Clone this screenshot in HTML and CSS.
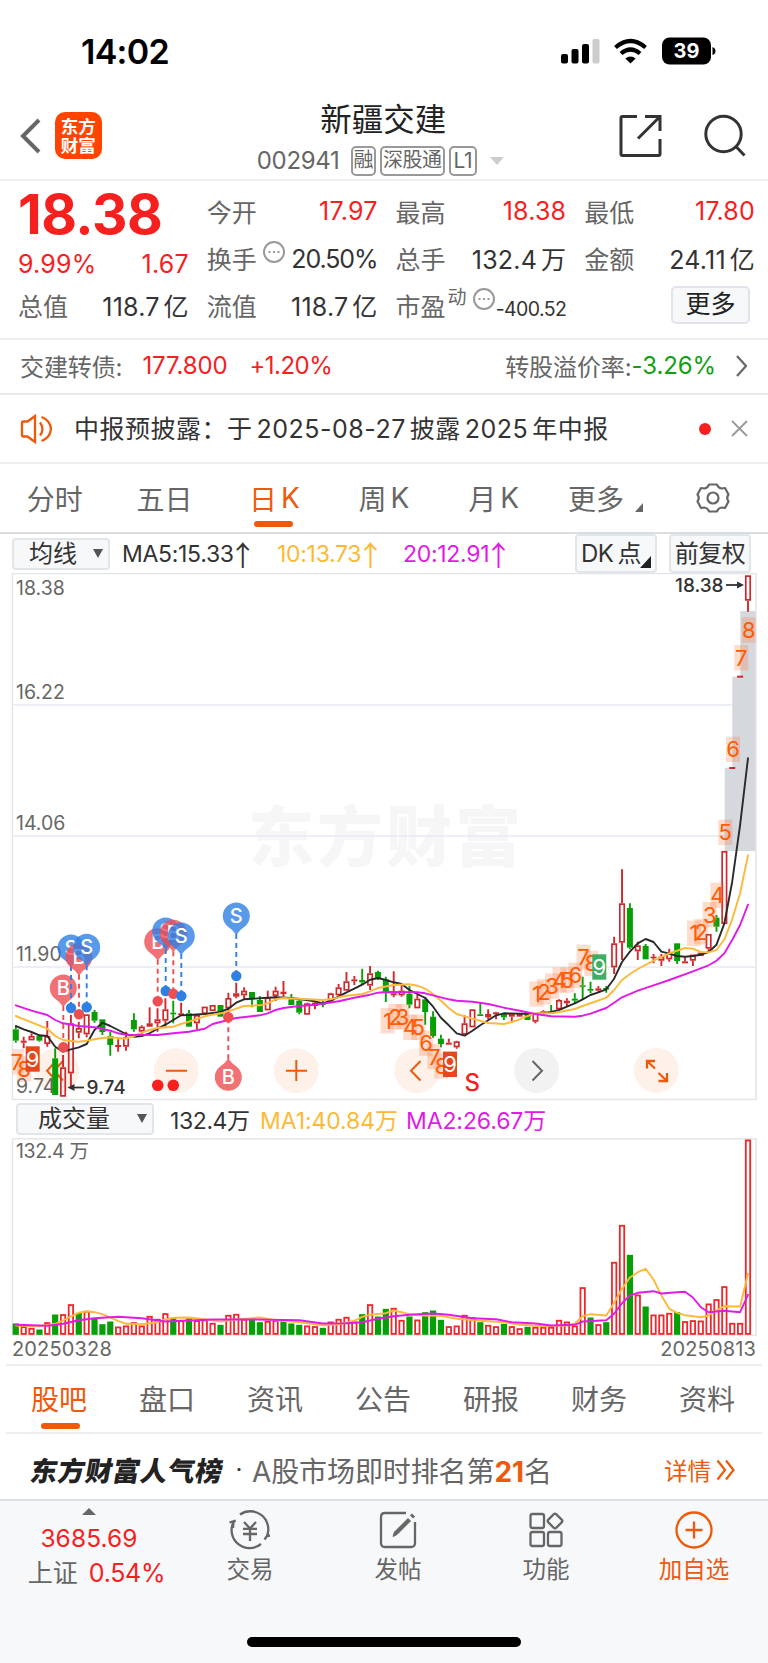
FILE: index.html
```html
<!DOCTYPE html>
<html lang="zh-CN">
<head>
<meta charset="utf-8">
<title>新疆交建 002941</title>
<link rel="stylesheet" href="styles.css">
</head>
<body>
<div class="app">
  <header class="status">
    <span class="clock">14:02</span>
    <svg class="status-icons" width="156" height="30" viewBox="0 0 156 30">
      <rect x="0" y="17" width="7" height="9.5" rx="2"/><rect x="10.500" y="12" width="7" height="14.500" rx="2"/><rect x="21" y="7" width="7" height="19.500" rx="2"/><rect x="31.500" y="2" width="7" height="24.500" rx="2" fill="#ccc"/>
      <g fill="none" stroke="#000" stroke-width="4.200"><path d="M54.500 10.500 Q69.500 -2.500 84.500 10.500"/><path d="M60 16.500 Q69.500 8.500 79 16.500"/></g>
      <path d="M64.300 21.500 Q69.500 17.500 74.700 21.500 L69.500 26.500 Z"/>
      <rect x="101" y="0.500" width="49" height="27" rx="7.500"/><path d="M151.500 10 Q154.500 11 154.500 14 T151.500 18 Z"/>
      <text x="125.500" y="21" class="battery">39</text>
    </svg>
  </header>

  <nav class="titlebar">
    <svg class="back" width="24" height="38" viewBox="0 0 24 38"><path d="M20 3 L4 19 L20 35"/></svg>
    <div class="logo"><span>东方</span><span>财富</span></div>
    <div class="title">
      <h1>新疆交建</h1>
      <div class="code"><span class="num">002941</span><i>融</i><i class="w3">深股通</i><i class="w2">L1</i><b class="caret"></b></div>
    </div>
    <svg class="share" width="44" height="44" viewBox="0 0 44 44"><path d="M18 2.500H3.500Q2 2.500 2 4V40Q2 41.500 3.500 41.500H39.500Q41 41.500 41 40V25 M26 2.500H41V17 M41 2.500 L19 24.500"/></svg>
    <svg class="search" width="44" height="44" viewBox="0 0 44 44"><circle cx="20.500" cy="20" r="17.700"/><path d="M32.500 32 L41.500 41.500"/></svg>
  </nav>

  <section class="quote">
    <div class="cell price">18.38</div>
    <div class="cell"><label>今开</label><b class="red">17.97</b></div>
    <div class="cell"><label>最高</label><b class="red">18.38</b></div>
    <div class="cell"><label>最低</label><b class="red">17.80</b></div>
    <div class="cell low"><b class="red">9.99%</b><b class="red">1.67</b></div>
    <div class="cell"><label>换手<svg class="dots" width="22" height="22" viewBox="0 0 22 22"><circle cx="11" cy="11" r="10"/><path d="M5.500 11h2M10 11h2M14.500 11h2"/></svg></label><b class="tight">20.50%</b></div>
    <div class="cell"><label>总手</label><b>132.4<s></s>万</b></div>
    <div class="cell"><label>金额</label><b>24.11<s></s>亿</b></div>
    <div class="cell"><label>总值</label><b>118.7<s></s>亿</b></div>
    <div class="cell"><label>流值</label><b>118.7<s></s>亿</b></div>
    <div class="cell"><label>市盈<sup>动</sup><svg class="dots" width="22" height="22" viewBox="0 0 22 22"><circle cx="11" cy="11" r="10"/><path d="M5.500 11h2M10 11h2M14.500 11h2"/></svg></label><b class="small">-400.52</b></div>
    <div class="cell end"><button class="more">更多</button></div>
  </section>

  <section class="bond">
    <span>交建转债:</span><span class="red b1">177.800</span><span class="red b2">+1.20%</span>
    <span class="premium">转股溢价率:</span><span class="green">-3.26%</span>
    <svg class="chev" width="14" height="24" viewBox="0 0 14 24"><path d="M2 2 L11 12 L2 22"/></svg>
  </section>

  <section class="notice">
    <svg width="34" height="30" viewBox="0 0 34 30"><path d="M2 8.500Q2 7.500 3 7.500H7.500L15 2V28L7.500 22.500H3Q2 22.500 2 21.500Z M20 8.500Q25 15 20 21.500 M21.500 3Q30 6 31 15Q30 24 21.500 27"/></svg>
    <span class="msg">中报预披露：<span class="msg2">于<s></s>2025-08-27<s></s>披露<s></s>2025<s></s>年中报</span></span>
    <i class="dot"></i>
    <svg class="close" width="17" height="17" viewBox="0 0 17 17"><path d="M1 1L16 16M16 1L1 16"/></svg>
  </section>

  <nav class="tabs">
    <span>分时</span><span>五日</span><span class="on">日<s></s>K</span><span>周<s></s>K</span><span>月<s></s>K</span><span class="hasmore">更多<i></i></span>
    <span><svg class="gear" width="34" height="32" viewBox="0 0 34 32"><path d="M13 2.500H21Q22 6 25.500 6.500L29 6L32.500 12.500Q30 16 32.500 19.500L29 26L25.500 25.500Q22 26 21 29.500H13Q12 26 8.500 25.500L5 26L1.500 19.500Q4 16 1.500 12.500L5 6L8.500 6.500Q12 6 13 2.500Z"/><circle cx="17" cy="16" r="5.500"/></svg></span>
  </nav>

  <div class="malist">
    <button class="pick">均线<i></i></button>
    <span class="m5">MA5:15.33<em>↑</em></span><span class="m10">10:13.73<em>↑</em></span><span class="m20">20:12.91<em>↑</em></span>
    <button class="dk">DK<s></s>点<i></i></button><button class="fq">前复权</button>
  </div>

  <svg id="kline" class="chart" width="768" height="528" viewBox="0 573 768 528"></svg>

  <div class="vollist">
    <button class="pick wide">成交量<i></i></button>
    <span class="v0">132.4万</span><span class="m10 v1">MA1:40.84万</span><span class="m20 v2">MA2:26.67万</span>
  </div>

  <svg id="volume" class="chart" width="768" height="198" viewBox="0 1137.500 768 198"></svg>
  <div class="dates"><span>20250328</span><span>20250813</span></div>

  <nav class="tabs info">
    <span class="on">股吧</span><span>盘口</span><span>资讯</span><span>公告</span><span>研报</span><span>财务</span><span>资料</span>
  </nav>

  <section class="rank">
    <strong>东方财富人气榜</strong><span class="mid">·</span>
    <span class="ranktext">A股市场即时排名第<b>21</b>名</span>
    <span class="detail">详情</span>
    <svg width="20" height="22" viewBox="0 0 20 22"><path d="M1.500 1.500L9 11L1.500 20.500M10 1.500L17.500 11L10 20.500"/></svg>
  </section>

  <footer class="dock">
    <div class="index"><i></i><b>3685.69</b><p>上证<b>0.54%</b></p></div>
    <div class="item"><svg width="44" height="40" viewBox="0 0 44 40"><path d="M12 4.500A18 18 0 0 1 39 26L36.500 29.500M39 26L42 25.500 M33 34A18 18 0 0 1 5.500 12L7.500 10.500L1.500 12.500M5.500 12L5 18 M16 12L22 18.500L28 12M15 18.800H29M15 24H29M22 18.500V31"/></svg>交易</div>
    <div class="item"><svg width="44" height="40" viewBox="0 0 44 40"><path d="M30 3H9Q5 3 5 7V33Q5 37 9 37H35Q39 37 39 33V12"/><path d="M17 26.500L18.500 22L32 8.500L34.500 11L21 24.500Z" fill="#666" stroke-width="1"/><path d="M35.500 7L37.500 5" stroke-width="4.500"/></svg>发帖</div>
    <div class="item"><svg width="44" height="40" viewBox="0 0 44 40"><rect x="6.500" y="4" width="13.500" height="14" rx="2"/><rect x="6.500" y="22" width="13.500" height="14" rx="2"/><rect x="24" y="22" width="13.500" height="14" rx="2"/><rect x="25.300" y="5.300" width="11.400" height="11.400" rx="2" transform="rotate(45 31 11)"/></svg>功能</div>
    <div class="item add"><svg width="44" height="40" viewBox="0 0 44 40"><circle cx="22" cy="20" r="17.500"/><path d="M22 11.500V28.500M13.500 20H30.500"/></svg>加自选</div>
    <div class="home"></div>
  </footer>
</div>
<script src="chart.js"></script>
</body>
</html>
```
FILE: styles.css
```css
* { box-sizing: border-box; }
body { margin: 0; background: #fff; font-family: Inter, "Noto Sans CJK SC", sans-serif; color: #333; }
button { font: inherit; color: inherit; padding: 0; margin: 0; }
h1, p { margin: 0; font-weight: 400; }
i, em { font-style: normal; }
s { display: inline-block; width: 4px; }
svg { flex: none; display: block; }
.app { width: 768px; height: 1663px; display: flex; flex-direction: column; overflow: hidden; white-space: nowrap; }
.app > * { flex: none; }
.red { color: #f6211f; }
.green { color: #10a10f; }

.status { height: 95px; display: flex; justify-content: space-between; padding: 37px 51px 0 81px; }
.clock { font-size: 34px; line-height: 30px; font-weight: 600; color: #000; letter-spacing: -0.700px; }
.battery { fill: #fff; font: 700 20px Inter, sans-serif; text-anchor: middle; }

.titlebar { height: 86px; display: flex; align-items: center; padding: 0 21px 3px 19px; border-bottom: 2px solid #f0f0f0; }
.back { fill: none; stroke: #666; stroke-width: 4; }
.logo { margin-left: 12px; width: 47px; height: 47px; border-radius: 10px; background: #ff4400; color: #fff; font: 700 17.500px/18.500px "Noto Sans CJK SC", sans-serif; display: flex; flex-direction: column; align-items: center; justify-content: center; }
.title { margin-left: 148px; width: 266px; text-align: center; padding-top: 6px; }
.title h1 { font-size: 31.500px; line-height: 40px; color: #222; padding-left: 3px; }
.code { display: flex; align-items: center; height: 34px; margin-top: 4px; padding-left: 7px; color: #666; }
.code .num { font-size: 24px; letter-spacing: -0.300px; width: 91px; margin-right: 3px; text-align: left; }
.code i { border: 2px solid #999; border-radius: 5px; height: 30px; width: 25px; margin-right: 4px; font-size: 20px; line-height: 25px; letter-spacing: -0.500px; display: flex; align-items: center; justify-content: center; }
.code i.w3 { width: 65px; }
.code i.w2 { width: 28px; font-size: 21px; }
.code .caret { margin-left: 9px; border: 7px solid transparent; border-top: 8px solid #ccc; border-bottom: 0; }
.share { margin-left: 105px; fill: none; stroke: #333; stroke-width: 3; }
.search { margin-left: 40px; fill: none; stroke: #333; stroke-width: 3; }

.quote { height: 159px; display: grid; grid-template-columns: repeat(4, 1fr); grid-template-rows: 47px 47px 47px; column-gap: 18px; padding: 6px 13px 0 18px; border-bottom: 2px solid #eee; }
.cell { display: flex; align-items: center; justify-content: space-between; }
.cell label { font-size: 25px; color: #666; display: flex; align-items: center; }
.cell b { font-weight: 400; font-size: 25px; letter-spacing: 0.200px; }
.cell b.tight { letter-spacing: -1.100px; padding-top: 2px; }
.cell b.small { font-size: 19.500px; padding-top: 9px; letter-spacing: -0.600px; }
.cell.low { padding-top: 13px; }
.cell.price { font-size: 55px; font-weight: 650; color: #f6211f; letter-spacing: -0.500px; padding-top: 6px; }
.cell.end { justify-content: flex-end; padding-right: 5px; }
.cell sup { font-size: 19px; vertical-align: 0; margin-top: -14px; margin-left: 2px; line-height: 20px; }
.dots { fill: none; stroke: #999; stroke-width: 2; margin: -11px 0 0 6px; }
.more { width: 79px; height: 38px; border: 2px solid #e2e4ea; border-radius: 5px; background: #f7f8fa; font-size: 25px; line-height: 33px; color: #222; }

.bond { height: 55px; display: flex; align-items: center; padding: 0 19px 2px 20px; border-bottom: 2px solid #eaeaea; font-size: 24px; color: #666; letter-spacing: -0.100px; }
.b1 { margin-left: 20px; width: 107px; }
.b2 { letter-spacing: -0.500px; }
.premium { margin-left: auto; }
.chev { margin-left: 19px; fill: none; stroke: #666; stroke-width: 2.200; }

.notice { height: 69px; display: flex; align-items: center; padding: 0 20px; border-bottom: 2px solid #eee; }
.notice svg { fill: none; stroke: #ee5a0a; stroke-width: 2.300; }
.msg { margin-left: 20px; font-size: 25px; letter-spacing: 0.500px; color: #333; padding-bottom: 4px; }
.msg2 { letter-spacing: 0.500px; }
.dot { margin-left: auto; width: 12px; height: 12px; border-radius: 50%; background: #f6211f; }
.notice .close { margin-left: 20px; stroke: #999; stroke-width: 1.800; }

.tabs { height: 70px; display: flex; border-bottom: 2px solid #d9dde2; font-size: 28px; color: #666; }
.tabs span { flex: 1; display: flex; align-items: center; justify-content: center; padding-bottom: 1px; position: relative; }
.tabs .on { color: #ee5a0a; }
.tabs .on::after { content: ""; position: absolute; left: 50%; bottom: 5px; width: 39px; height: 6px; margin-left: -20px; border-radius: 3px; background: #ee5a0a; }
.hasmore i { margin: 20px -4px 0 11px; border-left: 8px solid transparent; border-bottom: 9px solid #666; }
.gear { fill: none; stroke: #666; stroke-width: 2.200; stroke-linejoin: round; }

.malist { height: 39px; display: flex; align-items: center; padding-left: 12px; font-size: 23px; letter-spacing: -0.300px; }
.malist span, .vollist span { display: flex; align-items: center; }
.malist em { font-size: 28px; font-family: "Noto Sans CJK SC"; width: 16px; line-height: 20px; margin-left: 1px; display: flex; justify-content: center; }
.pick, .dk, .fq { border: 2px solid #e2e5ea; border-radius: 4px; background: #f7f8fa; flex: none; position: relative; }
.pick { width: 98px; height: 32px; line-height: 26px; font-size: 24px; letter-spacing: 0; padding-right: 16px; text-align: center; }
.pick i { position: absolute; right: 5px; top: 9px; border: 5px solid transparent; border-top: 9px solid #555; border-bottom: 0; }
.m5 { margin-left: 12px; width: 155px; }
.m10 { color: #fdb935; }
.m20 { color: #e01be6; }
.malist .m10 { width: 126px; }
.malist .m20 { width: 160px; }
.dk, .fq { width: 82px; height: 39px; line-height: 33px; font-size: 24px; letter-spacing: -0.500px; margin-left: 12px; }
.dk { text-align: left; padding-left: 4px; }
.dk i { position: absolute; right: 4px; bottom: 3px; border-left: 11px solid transparent; border-bottom: 12px solid #222; }

.vollist { height: 36.500px; display: flex; align-items: center; padding: 0 0 0 16px; font-size: 23px; letter-spacing: -0.100px; }
.pick.wide { width: 138px; padding-right: 22px; }
.v0 { margin-left: 16px; width: 90px; letter-spacing: -0.400px; }
.v1 { width: 146px; }

.dates { height: 28.500px; display: flex; justify-content: space-between; padding: 0 12px; font-size: 20px; line-height: 26px; color: #666; letter-spacing: 0.150px; }

.tabs.info { border-top: 2px solid #eee; height: 70px; margin: 0 6px; border-bottom: 2px solid #eee; }
.tabs.info .on::after { margin-left: -19px; bottom: 3px; }
.tabs.info span { padding: 0 2px 3px 0; }

.rank { height: 65px; display: flex; align-items: center; padding: 6px 32px 0 31px; }
.rank strong { font: 900 27px "Noto Sans CJK SC", sans-serif; color: #222; transform: skewX(-10deg); width: 195px; letter-spacing: 0.500px; }
.mid { width: 26px; text-align: center; font-size: 24px; }
.ranktext { font-size: 28px; color: #666; letter-spacing: -0.100px; }
.ranktext b { color: #ee5a0a; font-weight: 700; }
.detail { margin-left: auto; margin-right: 5px; font-size: 23.500px; color: #ee5a0a; }
.rank svg { fill: none; stroke: #ee5a0a; stroke-width: 2.200; }

.dock { flex: 1 0 auto; border-top: 2px solid #dcdee3; background: #f7f8fa; display: grid; grid-template-columns: 176px repeat(4, 148px); grid-template-rows: 100px 1fr; color: #666; font-size: 23.500px; }
.item { display: flex; flex-direction: column; align-items: center; padding-top: 9px; line-height: 36px; }
.item svg { fill: none; stroke: #666; stroke-width: 2.300; margin-bottom: 2px; }
.item.add { color: #ee5a0a; }
.item.add svg { stroke: #ee5a0a; }
.index { display: flex; flex-direction: column; align-items: center; padding: 7px 0 0 2px; font-size: 24.500px; line-height: 35px; }
.index > i { border: 7px solid transparent; border-bottom: 7px solid #666; border-top: 0; margin-bottom: 6px; }
.index b { font-weight: 400; color: #f6211f; letter-spacing: 0.100px; }
.index p b { margin-left: 11px; letter-spacing: -0.300px; }
.index p { margin-left: 15px; font-size: 25px; }
.home { grid-column: 1 / -1; width: 274px; height: 10px; border-radius: 5px; background: #000; margin: 36px auto 0; }

.chart { overflow: hidden; }
.axis { font: 19.500px Inter, "Noto Sans CJK SC", sans-serif; fill: #666; }
.peak { font: 500 19px Inter, sans-serif; fill: #333; }
.watermark { font: 900 66px "Noto Sans CJK SC", sans-serif; fill: #f6f6f6; }
.tag { font: 22px Inter, sans-serif; fill: #ff5a00; text-anchor: middle; }
.pin { font: 500 20px Inter, sans-serif; fill: #fff; text-anchor: middle; }
.sell { font: 500 24px Inter, sans-serif; fill: #f6211f; text-anchor: middle; }
```
FILE: chart.js
```js
const STEP = 7.873, X0 = 15.8;
const px = i => X0 + i * STEP;
const py = v => 880 + v / 3;
const RED = '#d0282c', GREEN = '#06a006';

// Each row: direction, high, body top, body bottom, low
const candles = `G440,448,482,488 R470,482,488,505 R460,468,481,481 G465,468,482,485 R423,468,492,500 G505,535,645,645
R525,562,650,650 R405,430,580,620 R425,444,458,475 R403,403,463,472 G390,396,422,428 G418,418,456,465
G455,468,495,527 R478,495,501,515 R455,472,500,512 G400,420,448,455 R436,440,455,462 R382,430,440,440
R385,418,430,455 R355,388,422,440 G362,398,403,430 R368,400,405,405 G390,400,440,440 R405,405,430,448
R380,380,402,402 R375,375,393,393 G375,375,410,410 R338,354,385,400 R308,340,350,355 R322,332,346,360
G336,336,356,382 G348,360,396,396 R332,352,391,391 R320,332,348,363 R303,335,342,350 G342,358,375,375
G358,362,398,403 R368,370,404,404 R366,368,378,388 G362,370,373,382 R338,340,362,370 R312,322,346,350
R276,304,332,332 R288,298,304,315 G266,300,307,312 R258,280,317,330 G272,276,296,300 G290,298,335,366
R274,340,346,352 R312,332,346,350 G318,342,374,385 R345,356,385,385 G350,358,396,434 G394,410,468,473
G464,476,492,502 R476,488,494,494 R482,484,502,506 R406,430,464,464 R388,388,442,442 G370,403,408,408
R388,402,412,418 R395,397,403,418 G398,400,412,420 R402,402,410,425 R402,402,410,410 G400,400,420,420
R400,400,425,430 R391,394,398,398 G375,396,398,398 R358,360,388,388 R355,362,370,380 G340,356,362,370
G290,316,320,360 G305,327,332,340 R318,325,332,338 G318,324,328,338 R170,190,262,282 R-32,70,188,240
G70,84,203,208 R185,196,214,240 G192,198,238,238 R222,230,235,250 R222,230,242,258 R206,220,238,245
G190,190,243,252 R232,244,250,250 R224,224,242,258 R215,218,228,228 R162,162,206,214 G105,113,140,155
R-87,-87,132,132 R-339,-339,-333,-333 R-613,-613,-607,-607 R-914,-914,-838,-805`.split(/\s+/)
  .map(s => [s[0], ...s.slice(1).split(',').map(Number)]);

const parse = s => s.trim().split(/\s+/).map(p => p.split(':').map(Number));
const ma5 = parse(`0:438 1:448 2:456 3:466 4:468 5:500 6:515 7:508 8:502 9:492 10:450 11:428 12:438 13:450 14:462 15:470 16:468
17:460 18:446 19:434 20:420 21:406 22:405 24:402 26:396 27:386 28:368 29:358 30:356 33:352 35:354 36:357 38:364 39:370 40:362
41:350 42:337 43:326 44:314 45:299 46:294 47:300 48:307 49:312 50:330 51:342 52:354 53:380 54:413 55:436 56:460 57:467 58:452
59:436 60:421 61:406 62:400 66:402 67:400 68:396 69:390 70:380 71:370 72:358 73:345 74:337 75:328 76:296 77:246 78:215 79:190
80:177 81:186 82:215 83:221 84:228 85:230 86:228 87:224 88:216 89:194 90:130 91:5 92:-165 93:-365`);
const ma10 = parse(`0:408 4:446 5:468 6:480 7:483 8:485 9:482 10:478 11:474 12:472 14:476 15:468 16:458 17:450 18:444 20:440
21:432 22:425 23:417 24:409 26:400 27:394 28:386 29:378 31:376 32:370 33:358 34:354 36:356 39:360 40:358 41:352 42:347 44:342
45:334 46:324 48:315 50:313 51:317 52:326 53:342 54:362 55:384 56:402 58:416 60:429 62:432 63:426 64:418 65:408 66:400 68:400
69:396 71:387 72:378 75:353 76:330 77:300 78:282 79:267 81:242 83:220 85:204 86:206 87:216 88:217 89:210 90:178 91:118 92:40 93:-74`);
const ma20 = parse(`0:376 2:392 4:405 5:420 6:430 8:438 10:442 12:452 13:460 14:464 18:465 20:460 22:455 24:446 25:432 26:426
28:414 31:406 32:400 33:390 34:384 36:378 38:374 41:364 43:353 45:344 46:338 47:336 51:337 52:340 53:346 55:358 56:362 58:365
60:372 62:383 64:392 66:402 68:409 71:410 72:407 73:401 75:384 76:368 77:352 79:332 81:316 83:300 86:274 88:256 89:242 90:220
91:180 92:135 93:74`);

const line = (pts, y, color) => `<path d="M${pts.map(([i, v]) => px(i).toFixed(1) + ' ' + y(v).toFixed(1)).join('L')}" fill="none" stroke="${color}" stroke-width="1.9" stroke-linejoin="round" stroke-linecap="round"/>`;
const grid = y => `<path d="M12 ${y}H756" stroke="#e6eaf0" stroke-width="1.500"/>`;
const disc = (x, y, color) => `<circle cx="${x}" cy="${y}" r="22.500" fill="${color}"/>`;

let k = '<text class="watermark" x="248" y="861" textLength="273">东方财富</text>';
k += grid(705) + grid(836) + grid(967);
k += '<g fill="#d5d8dd"><path d="M740.300 611H756V676.700H740.300ZM732.300 676.700H756V768H732.300ZM724.700 768H756V851H724.700Z"/></g>';
k += '<rect x="12.500" y="573.500" width="743.500" height="526" fill="none" stroke="#e3e5e9" stroke-width="1.500"/>';
k += disc(56.7, 1070.7, '#fdf1ea') + disc(176.3, 1070.7, '#fdf1ea') + disc(296.3, 1070.7, '#fdf1ea') + disc(416.7, 1070.7, '#fdf1ea')
  + disc(536.7, 1070.4, '#f2f2f2') + disc(656.3, 1070.4, '#fdf1ea');
[['18.38', 594.5], ['16.22', 699], ['14.06', 830], ['11.90', 961], ['9.74', 1093]].forEach(([t, y]) => k += `<text class="axis" x="16" y="${y}">${t}</text>`);
k += '<g fill="none" stroke="#ee5a0a" stroke-width="2"><path d="M166 1070.700H187M286 1070.700H307M296.300 1060V1081M420.500 1061L411 1070.700L420.500 1080.500M56 1061L47 1070.700L56 1080.500M63 1061L54 1070.700L63 1080.500"/><path stroke-width="2.300" d="M655 1068.500L647 1061M655 1061H647V1068.500M658.500 1073L667 1081M658.500 1081H667V1073"/></g>';
k += '<path d="M532.500 1061L542 1070.700L532.500 1080.500" fill="none" stroke="#666" stroke-width="2"/>';

candles.forEach(([d, hi, top, bot, lo], i) => {
  const x = px(i), c = d === 'G' ? GREEN : RED, y1 = py(top), h = Math.max(1.5, (bot - top) / 3);
  k += `<path d="M${x} ${py(hi)}V${y1}M${x} ${y1 + h}V${py(lo)}" stroke="${c}" stroke-width="1.900"/>`;
  if (d === 'G' || h < 3) k += `<rect x="${x - 3}" y="${y1}" width="6" height="${h}" fill="${c}"/>`;
  else k += `<rect x="${x - 2.2}" y="${y1 + 0.8}" width="4.400" height="${h - 1.6}" fill="none" stroke="${c}" stroke-width="1.700"/>`;
});
k += line(ma5, py, '#2a2a2a') + line(ma10, py, '#fdb93a') + line(ma20, py, '#e01be6');

// Sequence counters: text, centre x, centre y, solid background
[['1', 387.5, 1020.7], ['2', 395.3, 1016.7], ['3', 402.5, 1016.7], ['4', 410.2, 1027.3], ['5', 418.3, 1027.3], ['6', 426, 1043.3], ['7', 434.3, 1056.7], ['8', 441.5, 1066],
 ['1', 536.5, 994], ['2', 544, 991.7], ['3', 552, 986], ['4', 559.5, 980], ['5', 567.3, 980], ['6', 575.3, 975.3], ['7', 583.5, 957.3], ['8', 591.3, 963.3],
 ['1', 694, 933.3], ['2', 701.3, 931.7], ['3', 709.7, 914.7], ['4', 717.3, 895.3], ['5', 725.3, 832.3], ['6', 733, 749.3], ['7', 741.3, 657.7], ['8', 748.7, 630],
 ['7', 16.7, 1061.7], ['8', 24, 1069],
 ['9', 32.7, 1059, '#e5481c'], ['9', 450, 1064.3, '#e5481c'], ['9', 599.3, 967, '#3fae62']].forEach(([t, x, y, bg]) => {
  const left = Math.max(12.5, x - 7), right = Math.min(756, x + 7);
  k += `<rect x="${left}" y="${y - 12.7}" width="${right - left}" height="25.400" fill="${bg || 'rgba(255,110,50,.24)'}"/><text class="tag" x="${x}" y="${y + 8}"${bg ? ' style="fill:#fff"' : ''}>${t}</text>`;
});

// Trade markers: side, x, pin centre y, anchor dot y
[['B', 63.3, 988, 1047.3], ['S', 71, 948, 1008], ['B', 79, 956.7, 1014.3], ['S', 86.7, 947.3, 1007.3],
 ['B', 157.7, 941.7, 1001.3], ['S', 165.7, 931, 991], ['B', 173.3, 933.3, 993.7], ['S', 181.3, 936, 996],
 ['S', 236.3, 916, 976], ['B', 228.3, 1077.3, 1017.3]].forEach(([t, x, y, dy]) => {
  const c = t === 'S' ? '#2f80e4' : '#ee4d52', dir = dy > y ? 1 : -1;
  k += `<path d="M${x} ${y + 18 * dir}V${dy}" stroke="${c}" stroke-width="1.900" stroke-dasharray="5 4"/><circle cx="${x}" cy="${dy}" r="5.200" fill="${c}"/>`;
  k += `<g fill="${c}" opacity=".8"><path d="M${x - 8.500} ${y + 10.500 * dir}A13.500 13.500 0 1 ${dir > 0 ? 1 : 0} ${x + 8.500} ${y + 10.500 * dir}Q${x + 3} ${y + 14 * dir} ${x} ${y + 19 * dir}Q${x - 3} ${y + 14 * dir} ${x - 8.500} ${y + 10.500 * dir}Z"/></g><text class="pin" x="${x}" y="${y + 7}">${t}</text>`;
});

k += '<circle cx="157.700" cy="1085.300" r="5.800" fill="#f6211f"/><circle cx="173.300" cy="1085.300" r="5.800" fill="#f6211f"/>';
k += '<text class="sell" x="472.300" y="1091">S</text>';
k += '<text class="peak" x="86.500" y="1094">9.74</text><path d="M70 1087.500H84" stroke="#333" stroke-width="1.800"/><path d="M67.500 1087.500l7-3.500v7z" fill="#333"/>';
k += '<text class="peak" x="675" y="592">18.38</text><path d="M726 585H740" stroke="#333" stroke-width="1.800"/><path d="M744 585l-7-3.500v7z" fill="#333"/>';
document.getElementById('kline').innerHTML = k;

// Volume bars, values measured down from the pane origin
const vy = v => 1095 + v / 3;
const vols = `G684 R692 R697 G702 R680 G657 R656 R626 G652 R646 G668 G686 G678 R693 R690 R680 R690 R661 R670 R653 G668 R674 G668 R674
R672 R682 G688 R658 R655 R670 G670 G680 R676 R674 G676 G684 G688 R690 R692 G697 R678 R670 R664 R678 G656 R626 G663 G640 R637 R673
G663 R672 G650 G645 G673 R692 R690 R658 R665 G680 R688 R692 G685 R692 R698 G694 R694 R694 R694 R673 R678 R690 R575 G666 R686 G680
R499 R388 G478 R597 G633 R657 R657 R652 G650 R677 R674 R675 R624 R611 R572 R682 R682 R132`.split(/\s+/);
const v1 = parse(`0:690 3:692 5:685 6:675 7:663 8:652 9:647 10:650 11:656 12:666 13:676 14:685 16:686 18:680 19:672 20:667 22:666
24:671 26:678 28:672 30:668 31:666 33:674 36:680 38:686 39:689 41:686 43:676 44:664 45:658 47:653 48:645 49:650 50:656 52:660
54:661 56:670 59:676 62:680 64:688 67:692 70:690 71:684 72:662 73:656 75:660 76:622 77:580 78:546 79:530 80:520 81:552 82:600
83:640 84:652 85:659 87:665 88:660 89:645 90:632 92:633 93:535`);
const v2 = parse(`0:688 4:691 6:685 8:674 10:668 13:664 16:668 19:678 22:675 25:672 30:672 36:674 39:684 42:683 44:680 46:670
48:662 50:658 53:654 55:658 58:668 61:671 63:680 66:684 68:690 71:688 72:678 75:674 76:655 77:623 78:600 79:592 81:587 82:594
84:590 85:589 86:606 87:635 88:650 90:646 92:650 93:598`);
let v = '<rect x="12.500" y="1138.300" width="743.500" height="196.200" fill="none" stroke="#e3e5e9" stroke-width="1.500"/><text class="axis" x="16" y="1157.500" textLength="73">132.4 万</text>';
vols.forEach((s, i) => {
  const x = px(i), y = vy(+s.slice(1)), h = 1334.3 - y;
  v += s[0] === 'G' ? `<rect x="${x - 3.1}" y="${y}" width="6.200" height="${h}" fill="${GREEN}"/>`
    : `<rect x="${x - 2.2}" y="${y + 0.9}" width="4.400" height="${h - 1.8}" fill="#fff" stroke="#f0262a" stroke-width="1.800"/>`;
});
v += line(v1, vy, '#fdb93a') + line(v2, vy, '#e01be6');
document.getElementById('volume').innerHTML = v;
```
